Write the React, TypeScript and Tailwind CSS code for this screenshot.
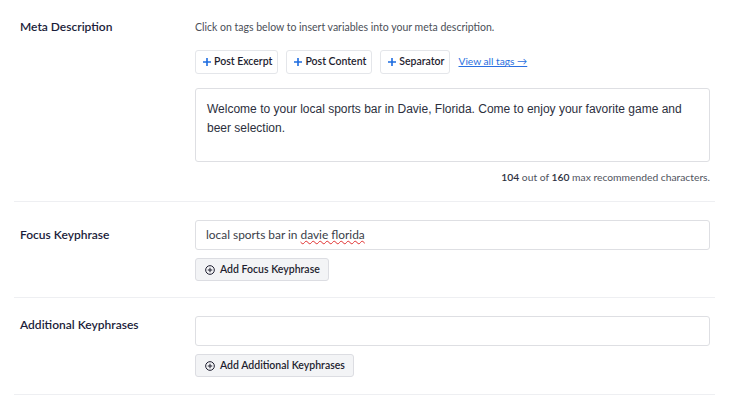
import React from 'react';

const ui = { fontFamily: '"Lato", "Noto Sans", sans-serif' };
const arial = { fontFamily: '"Liberation Sans", Arial, sans-serif' };

function TagButton({ label }: { label: string }) {
  return (
    <button className="flex h-[24px] items-center gap-[3px] rounded-[3px] border border-[#e4e6ea] bg-white pl-[7px] pr-[5px] text-[10.5px] font-semibold text-[#1e1e2f]">
      <svg width="8" height="8" viewBox="0 0 8 8" stroke="#1d6ce0" strokeWidth="1.6">
        <path d="M4 0v8M0 4h8" />
      </svg>
      {label}
    </button>
  );
}

function AddButton({ label }: { label: string }) {
  return (
    <button className="flex h-[23px] items-center gap-[5px] rounded-[3px] border border-[#dcdde2] bg-[#f3f4f6] pl-[9px] pr-[8px] text-[10.5px] font-semibold text-[#1e1e2f]">
      <svg width="10" height="10" viewBox="0 0 12 12" fill="none" stroke="#1e1e2f" strokeWidth="1.2">
        <circle cx="6" cy="6" r="5.2" />
        <path d="M6 3.3v5.4M3.3 6h5.4" />
      </svg>
      {label}
    </button>
  );
}

function Row({ label, children, pt, labelMt }: { label: string; children: React.ReactNode; pt: string; labelMt: string }) {
  return (
    <div className={`flex border-b border-[#eeeff2] ${pt}`}>
      <div className={`w-[181px] shrink-0 pl-[6px] text-[12px] font-semibold leading-[17px] text-[#1b1d3a] ${labelMt}`}>
        {label}
      </div>
      <div className="w-[515px]">{children}</div>
    </div>
  );
}

export default function App() {
  return (
    <div className="h-[397px] w-[730px] overflow-hidden bg-white" style={ui}>
      <div className="ml-[14px] w-[701px]">
        <Row label="Meta Description" pt="pt-[17px]" labelMt="mt-[1px]">
          <p className="mt-[3px] text-[10.5px] leading-[15px] text-[#4b4f58]">
            Click on tags below to insert variables into your meta description.
          </p>
          <div className="mt-[15px] flex items-center gap-[8px]">
            <TagButton label="Post Excerpt" />
            <TagButton label="Post Content" />
            <TagButton label="Separator" />
            <a className="text-[10.2px] text-[#2a6fe0] underline">View all tags →</a>
          </div>
          <div
            className="mt-[14px] h-[74px] rounded-[3px] border border-[#dedfe3] px-[11px] pt-[11px] text-[12px] leading-[19px] text-[#2c2f3d]"
            style={arial}
          >
            Welcome to your local sports bar in Davie, Florida. Come to enjoy your favorite game and beer selection.
          </div>
          <p className="mb-[16px] mt-[8px] text-right text-[10.3px] leading-[15px] text-[#50545e]">
            <span className="font-semibold text-[#2c2f3d]">104</span> out of{' '}
            <span className="font-semibold text-[#2c2f3d]">160</span> max recommended characters.
          </p>
        </Row>
        <Row label="Focus Keyphrase" pt="pt-[18px]" labelMt="mt-[6px]">
          <div className="flex h-[30px] items-center rounded-[3px] border border-[#dedfe3] px-[10px] text-[11.9px] text-[#3a3d48]">
            local sports bar in{' '}
            <span className="ml-[3px] underline decoration-[#e03030] decoration-wavy decoration-1">davie florida</span>
          </div>
          <div className="mb-[16px] mt-[8px] flex">
            <AddButton label="Add Focus Keyphrase" />
          </div>
        </Row>
        <Row label="Additional Keyphrases" pt="pt-[18px]" labelMt="mt-0">
          <div className="h-[30px] rounded-[3px] border border-[#dedfe3]" />
          <div className="mb-[17px] mt-[8px] flex">
            <AddButton label="Add Additional Keyphrases" />
          </div>
        </Row>
      </div>
    </div>
  );
}
